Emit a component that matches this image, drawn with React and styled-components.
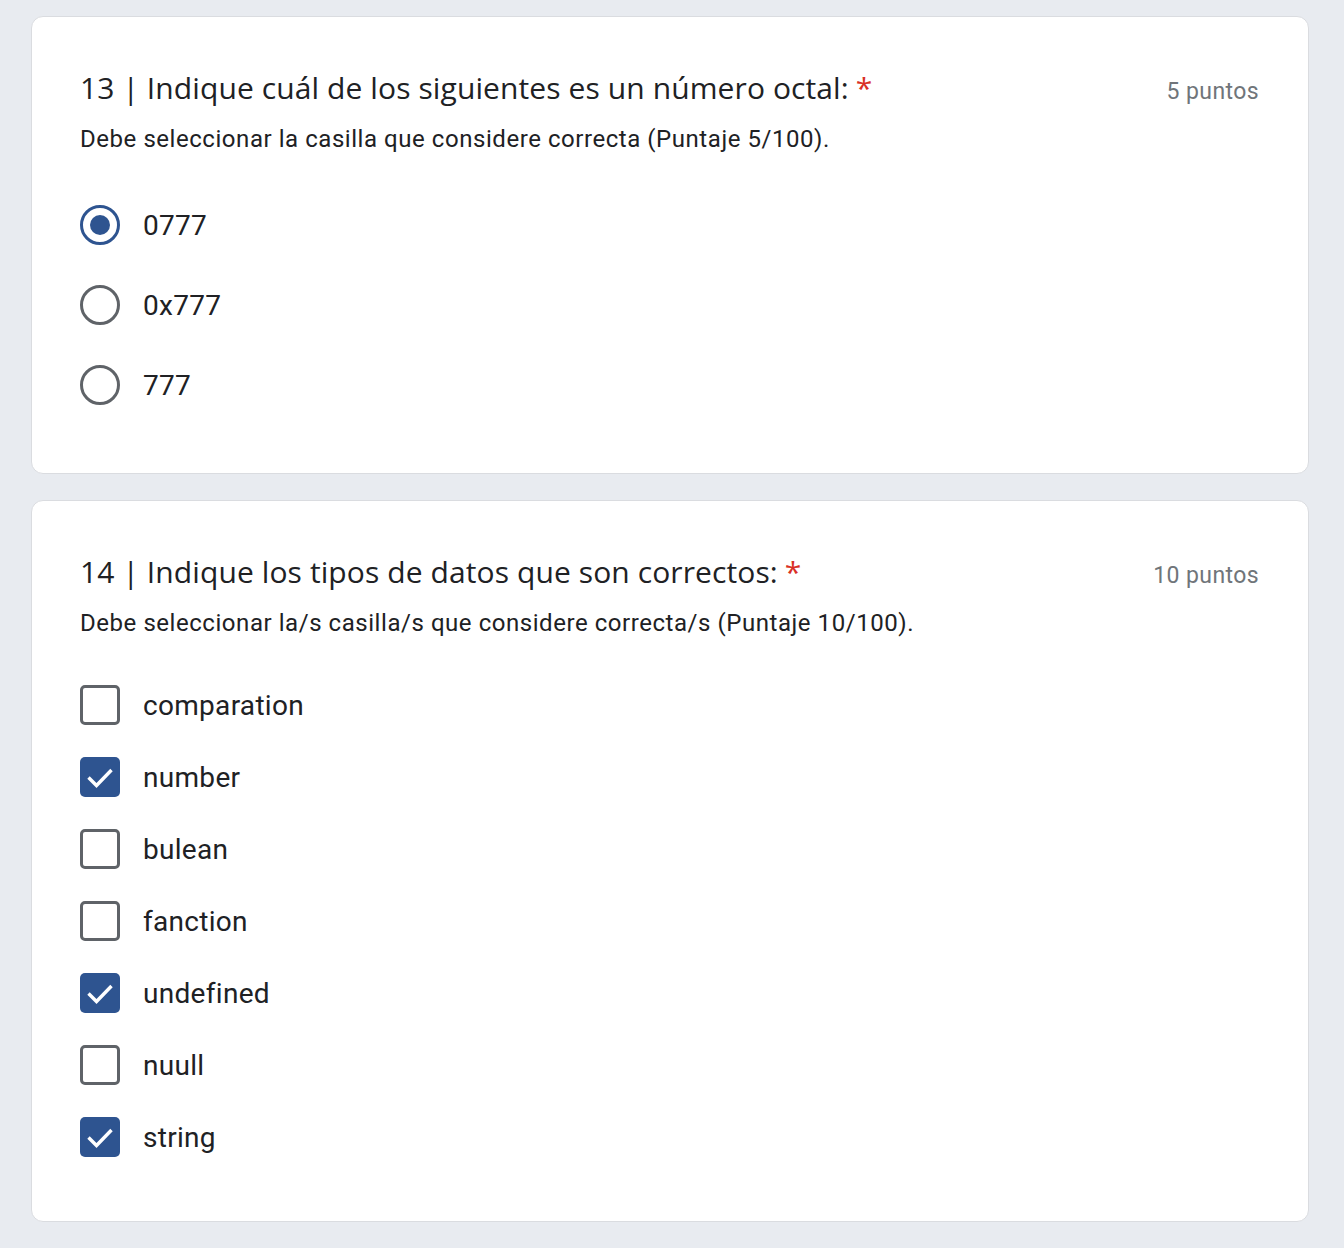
import React from "react";
import styled, { createGlobalStyle } from "styled-components";

const Global = createGlobalStyle`
  html, body { margin: 0; padding: 0; background: #e8ebf0; }
  body { font-family: Roboto, "Liberation Sans", sans-serif; color: #202124; }
`;

const Page = styled.div`
  display: flex;
  flex-direction: column;
  gap: 26px;
  padding: 16px 35px 0 31px;
  height: 1248px;
  overflow: hidden;
  box-sizing: border-box;
`;

const Card = styled.section`
  background: #fff;
  border: 1px solid #dadce0;
  border-radius: 12px;
  padding: 51px 48px 48px;
  flex-shrink: 0;
  min-height: ${(p) => p.$minH || 0}px;
`;

const Header = styled.div`
  display: flex;
  justify-content: space-between;
  align-items: baseline;
`;

const Title = styled.h2`
  margin: 0;
  font-family: "Open Sans", Roboto, sans-serif;
  font-weight: 400;
  font-size: 30px;
  line-height: 40px;
  color: #202124;
  letter-spacing: 0.1px;
`;

const Star = styled.span`
  color: #d93025;
  margin-left: 7px;
`;

const Points = styled.span`
  font-family: Roboto, sans-serif;
  font-size: 23px;
  letter-spacing: 0.4px;
  color: #70757a;
  margin-right: 1px;
`;

const Desc = styled.p`
  margin: 15px 0 0;
  font-family: Roboto, sans-serif;
  font-size: 24px;
  line-height: 32px;
  letter-spacing: 0.55px;
  color: #202124;
`;

const Options = styled.div`
  display: flex;
  flex-direction: column;
  margin-top: 30px;
`;

const Row = styled.label`
  display: flex;
  align-items: center;
  height: ${(p) => p.$h}px;
  gap: 23px;
`;

const Label = styled.span`
  font-family: Roboto, sans-serif;
  font-size: 28px;
  letter-spacing: 0.3px;
  color: #202124;
`;

const Radio = styled.span`
  width: 40px;
  height: 40px;
  box-sizing: border-box;
  border-radius: 50%;
  border: 3px solid ${(p) => (p.$on ? "#2e5490" : "#5f6368")};
  display: flex;
  align-items: center;
  justify-content: center;
  flex-shrink: 0;
  &::after {
    content: "";
    width: 20px;
    height: 20px;
    border-radius: 50%;
    background: #2e5490;
    display: ${(p) => (p.$on ? "block" : "none")};
  }
`;

const Box = styled.span`
  width: 40px;
  height: 40px;
  box-sizing: border-box;
  border-radius: 5px;
  border: ${(p) => (p.$on ? "none" : "3px solid #5f6368")};
  background: ${(p) => (p.$on ? "#2e5490" : "#fff")};
  display: flex;
  align-items: center;
  justify-content: center;
  flex-shrink: 0;
`;

const Check = () => (
  <svg width="40" height="40" viewBox="0 0 40 40">
    <path d="M8.5 20.5 L16.5 28.5 L31.5 13" fill="none" stroke="#fff" strokeWidth="3.4" />
  </svg>
);

const radios = [
  { t: "0777", on: true },
  { t: "0x777", on: false },
  { t: "777", on: false },
];

const checks = [
  { t: "comparation", on: false },
  { t: "number", on: true },
  { t: "bulean", on: false },
  { t: "fanction", on: false },
  { t: "undefined", on: true },
  { t: "nuull", on: false },
  { t: "string", on: true },
];

export default function App() {
  return (
    <>
      <Global />
      <Page>
        <Card>
          <Header>
            <Title>
              13 | Indique cuál de los siguientes es un número octal:<Star>*</Star>
            </Title>
            <Points>5 puntos</Points>
          </Header>
          <Desc>Debe seleccionar la casilla que considere correcta (Puntaje 5/100).</Desc>
          <Options>
            {radios.map((r) => (
              <Row key={r.t} $h={80}>
                <Radio $on={r.on} />
                <Label>{r.t}</Label>
              </Row>
            ))}
          </Options>
        </Card>
        <Card>
          <Header>
            <Title>
              14 | Indique los tipos de datos que son correctos:<Star>*</Star>
            </Title>
            <Points>10 puntos</Points>
          </Header>
          <Desc>Debe seleccionar la/s casilla/s que considere correcta/s (Puntaje 10/100).</Desc>
          <Options>
            {checks.map((c) => (
              <Row key={c.t} $h={72}>
                <Box $on={c.on}>{c.on && <Check />}</Box>
                <Label>{c.t}</Label>
              </Row>
            ))}
          </Options>
        </Card>
        <Card $minH={200} />
      </Page>
    </>
  );
}
